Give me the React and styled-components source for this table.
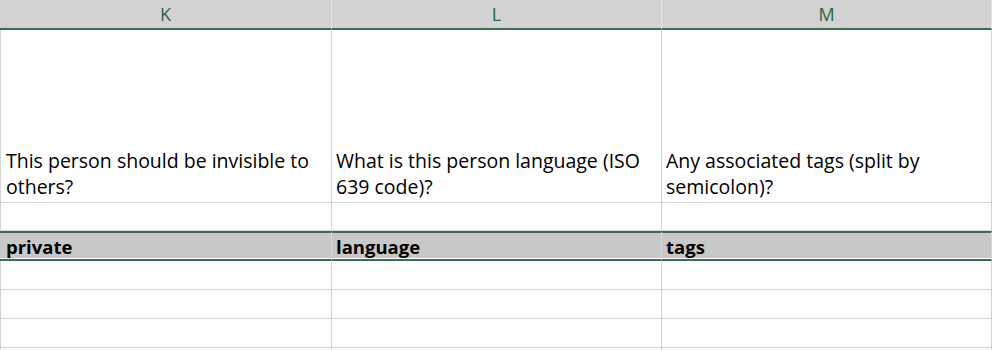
import React from 'react'
import styled, { createGlobalStyle } from 'styled-components';

const GlobalStyle = createGlobalStyle`
    html, body {
        margin: 0;
        padding: 0;
        background: #ffffff;
    }
`;

const Sheet = styled.div`
    width: 992px;
    height: 350px;
    overflow: hidden;
    display: grid;
    grid-template-columns: 332px 330px 330px;
    grid-template-rows: 30px 173px 28px 30px 29px 29px 29px 29px;
    font-family: "Open Sans", "Liberation Sans", sans-serif;
    color: #000000;
`;

const ColHead = styled.div`
    background: #d2d2d2;
    border-bottom: 2px solid #3a6e50;
    border-right: 1px solid #e4e4e4;
    display: flex;
    align-items: center;
    justify-content: center;
    font-size: 18px;
    color: #2f6347;
    padding-bottom: 1px;
    box-sizing: border-box;
`;

const Cell = styled.div`
    border-right: 1px solid #d4d4d4;
    border-bottom: 1px solid #d4d4d4;
    border-left: ${p => (p.first ? '1px solid #d4d4d4' : 'none')};
    box-sizing: border-box;
    display: flex;
    align-items: flex-end;
    padding: 0 4px 0 ${p => (p.first ? '5px' : '4px')};
    font-size: 19.5px;
    line-height: 26px;
`;

const Question = styled(Cell)`
    padding-bottom: 2px;
`;

const FieldCell = styled.div`
    background: #c8c8c8;
    border-top: 2px solid #3a6e50;
    border-right: 1px solid #d4d4d4;
    box-shadow: inset 0 -1px 0 #ffffff;
    border-bottom: 2px solid #3a6e50;
    box-sizing: border-box;
    display: flex;
    align-items: flex-end;
    padding: 0 6px 0 ${p => (p.first ? '6px' : '4px')};
    font-size: 18.5px;
    font-weight: 700;
    line-height: 24px;
`;

const columns = ['K', 'L', 'M'];

const questions = [
    'This person should be invisible to others?',
    'What is this person language (ISO 639 code)?',
    'Any associated tags (split by semicolon)?',
];

const fields = ['private', 'language', 'tags'];

export default function App() {
    return (
        <>
            <GlobalStyle />
            <Sheet>
                {columns.map(c => <ColHead key={c}>{c}</ColHead>)}

                {questions.map((q, i) => <Question key={q} first={i === 0}>{q}</Question>)}

                {columns.map((c, i) => <Cell key={'e' + c} first={i === 0} />)}

                {fields.map((f, i) => <FieldCell key={f} first={i === 0}>{f}</FieldCell>)}

                {[0, 1, 2, 3].map(r =>
                    columns.map((c, i) => <Cell key={r + c} first={i === 0} />)
                )}
            </Sheet>
        </>
    )
}
